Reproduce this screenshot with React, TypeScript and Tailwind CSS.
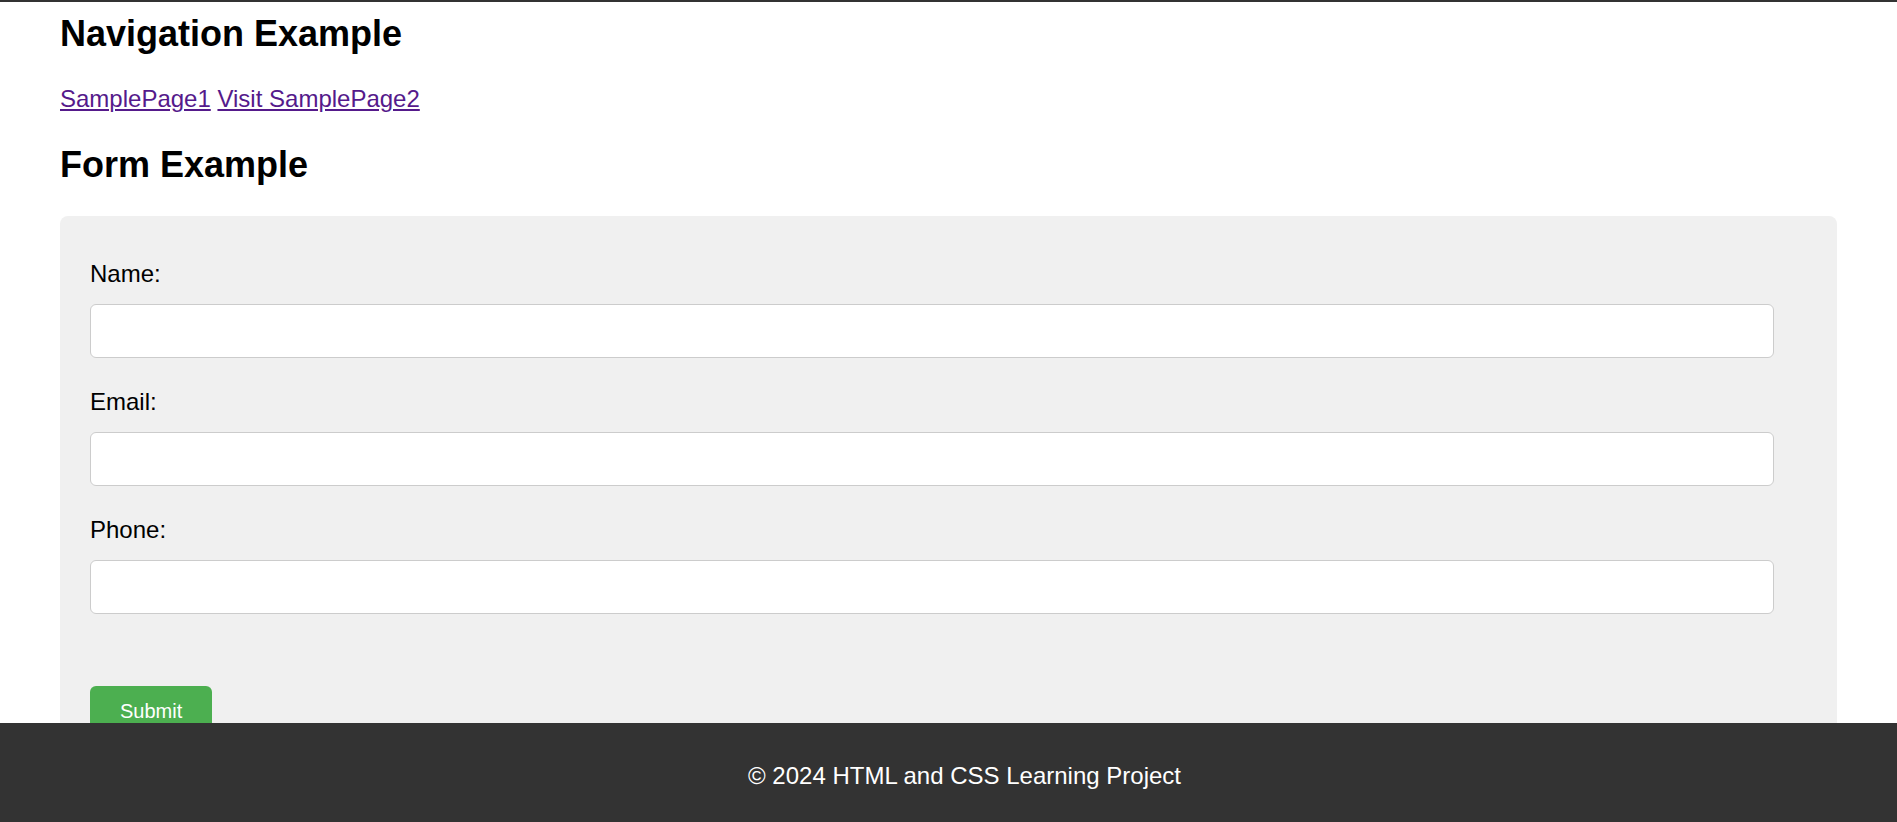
import React from 'react';

const fields = [
  { id: 'name', label: 'Name:', type: 'text' },
  { id: 'email', label: 'Email:', type: 'email' },
  { id: 'phone', label: 'Phone:', type: 'tel' },
];

const App: React.FC = () => {
  return (
    <div className="h-screen flex flex-col bg-white text-black overflow-hidden font-['Liberation_Sans',Arial,sans-serif]">
      {/* bottom edge of the header, page is scrolled */}
      <div className="h-[2px] bg-[#333] shrink-0" />

      <main className="flex-1 overflow-hidden px-[60px] pt-[11px]">
        <section>
          <h2 className="text-[36px] leading-[42px] font-bold">Navigation Example</h2>
          <nav className="mt-[30px] text-[24px] leading-[28px]">
            <a href="#" className="text-[#551a8b] underline">SamplePage1</a>{' '}
            <a href="#" className="text-[#551a8b] underline">Visit SamplePage2</a>
          </nav>
        </section>

        <section>
          <h2 className="mt-[31px] text-[36px] leading-[42px] font-bold">Form Example</h2>
          <form
            className="mt-[30px] bg-[#f0f0f0] rounded-[8px] px-[30px] pt-[44px] pb-[30px]"
            onSubmit={(e) => e.preventDefault()}
          >
            {fields.map((f) => (
              <div key={f.id}>
                <label htmlFor={f.id} className="block text-[24px] leading-[28px] mb-[16px]">
                  {f.label}
                </label>
                <input
                  id={f.id}
                  type={f.type}
                  className="block w-[1684px] h-[54px] mb-[30px] bg-white border border-[#ccc] rounded-[6px] px-[15px] text-[24px] outline-none"
                />
              </div>
            ))}
            <button
              type="submit"
              className="mt-[42px] bg-[#4caf50] text-white text-[20px] leading-[23px] px-[30px] pt-[14px] pb-[12px] rounded-[6px]"
            >
              Submit
            </button>
          </form>
        </section>
      </main>

      <footer className="h-[99px] shrink-0 bg-[#333] text-white flex items-center justify-center pt-[6px] pl-[32px]">
        <p className="text-[24px] leading-[28px]">© 2024 HTML and CSS Learning Project</p>
      </footer>
    </div>
  );
};

export default App;
